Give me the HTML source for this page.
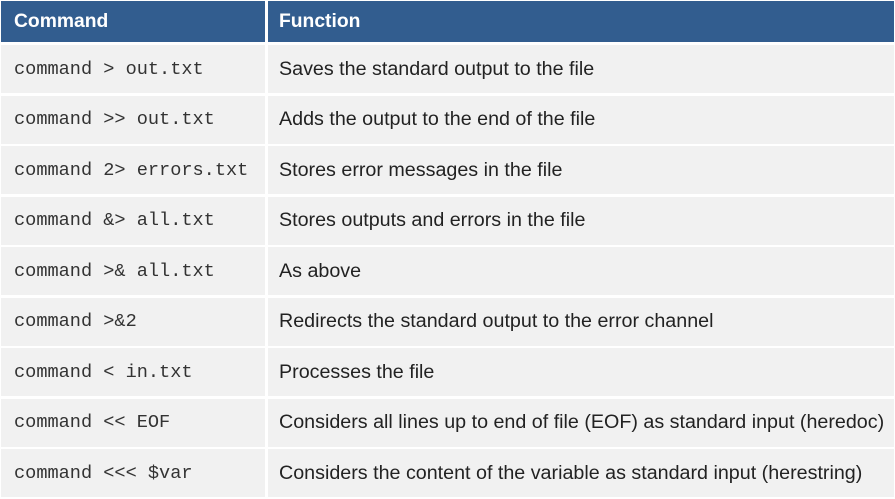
<!DOCTYPE html>
<html><head><style>
body{margin:0;width:895px;height:499px;background:#fff;position:relative;overflow:hidden;font-family:"Liberation Sans",sans-serif}
.c{position:absolute;display:flex;align-items:center;box-sizing:border-box;padding-left:13px;white-space:nowrap}
.h{background:#325d8f;color:#fff;font-weight:bold;font-size:19.3px}
.r{background:#f1f1f1;color:#222;font-size:19.7px}
.m{font-family:"Liberation Mono",monospace;font-size:18.6px;color:#333}
</style></head><body>
<div class="c h" style="left:1px;top:1px;width:264px;height:41px">Command</div>
<div class="c h" style="left:268px;top:1px;width:626px;height:41px;padding-left:11px">Function</div>
<div id="rows"></div>
<script>
var d=[["command &gt; out.txt","Saves the standard output to the file"],
["command &gt;&gt; out.txt","Adds the output to the end of the file"],
["command 2&gt; errors.txt","Stores error messages in the file"],
["command &amp;&gt; all.txt","Stores outputs and errors in the file"],
["command &gt;&amp; all.txt","As above"],
["command &gt;&amp;2","Redirects the standard output to the error channel"],
["command &lt; in.txt","Processes the file"],
["command &lt;&lt; EOF","Considers all lines up to end of file (EOF) as standard input (heredoc)"],
["command &lt;&lt;&lt; $var","Considers the content of the variable as standard input (herestring)"]];
var h="";
for(var i=0;i<d.length;i++){var t=45+i*50.5;
h+='<div class="c r m" style="left:1px;top:'+t+'px;width:264px;height:48px">'+d[i][0]+'</div>';
h+='<div class="c r" style="left:268px;top:'+t+'px;width:626px;height:48px;padding-left:11px">'+d[i][1]+'</div>';}
document.getElementById("rows").outerHTML=h;
</script>
</body></html>
